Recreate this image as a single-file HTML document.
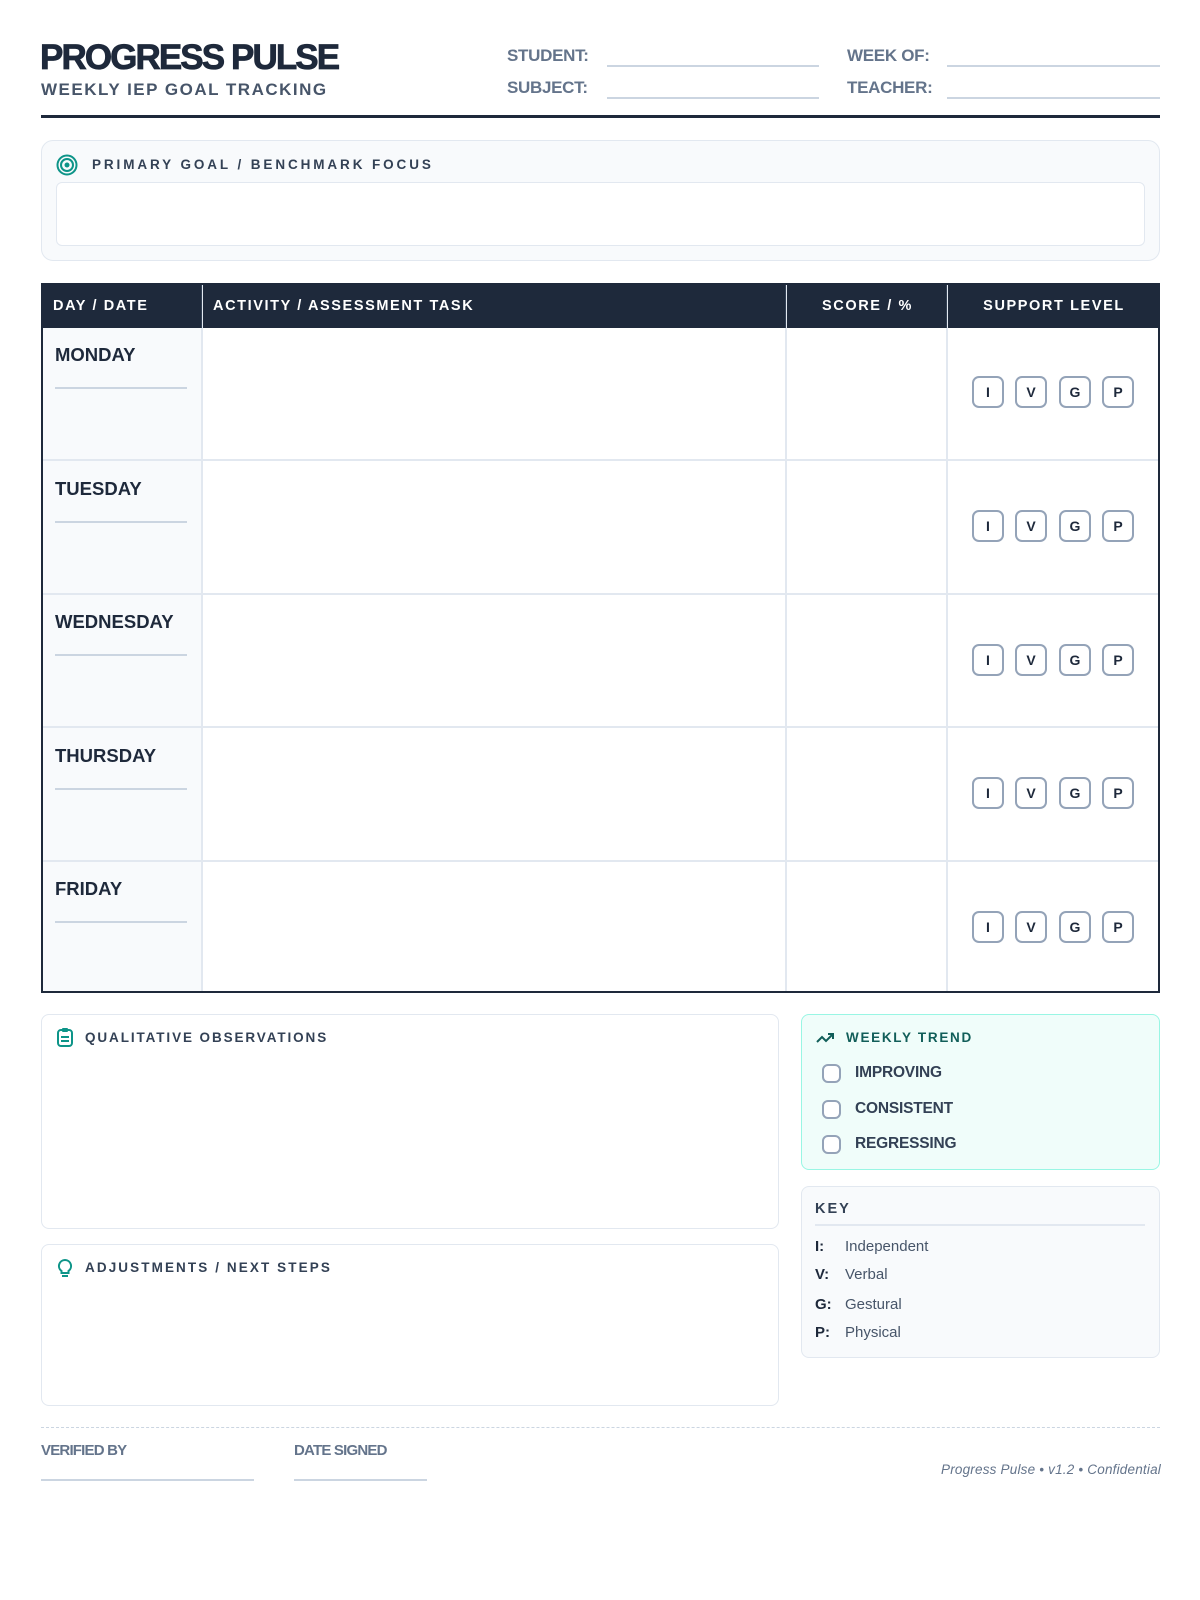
<!DOCTYPE html>
<html><head><meta charset="utf-8"><style>
*{box-sizing:border-box;margin:0;padding:0}
body{width:1200px;height:1600px;background:#fff;font-family:"Liberation Sans",sans-serif;position:relative;color:#1e293b;overflow:hidden}
.a{position:absolute}
.title{left:40px;top:38px;font-size:35px;font-weight:900;letter-spacing:-1.9px;color:#1e293b;-webkit-text-stroke:0.8px #1e293b}
.sub{left:41px;top:80px;font-size:17px;font-weight:bold;letter-spacing:1.5px;color:#475569}
.lbl{font-size:17px;font-weight:bold;color:#64748b;letter-spacing:-0.3px}
.ln{height:2px;background:#cbd5e1}
.rule{left:41px;top:115px;width:1119px;height:3px;background:#1e293b}
.goal{left:41px;top:140px;width:1119px;height:121px;background:#f8fafc;border:1.5px solid #e2e8f0;border-radius:12px}
.goalin{left:56px;top:182px;width:1089px;height:64px;background:#fff;border:1.5px solid #e2e8f0;border-radius:6px}
.cap{font-size:13.5px;font-weight:bold;letter-spacing:2.3px;color:#334155}
.tbl{left:41px;top:283px;width:1119px;height:710px;border:2px solid #1e293b;overflow:hidden}
.th{position:absolute;top:0;height:43px;background:#1e293b;color:#fff;font-size:14.5px;font-weight:bold;letter-spacing:1.6px;line-height:43px}
.day{font-size:18.5px;font-weight:bold;color:#1e293b}
.bd{position:absolute;width:32px;height:32px;border:2px solid #94a3b8;border-radius:7px;font-size:14px;font-weight:bold;text-align:center;line-height:28px;color:#1e293b;background:#fff}
.box{border:1.5px solid #e2e8f0;border-radius:8px;background:#fff}
.cb{position:absolute;width:19px;height:19px;border:2px solid #94a3b8;border-radius:6px;background:#fff}
.tl{font-size:15.5px;font-weight:bold;color:#334155;letter-spacing:-0.2px}
.kl{font-size:15px;font-weight:bold;color:#1e293b}
.kv{font-size:15px;color:#475569}
</style></head><body>
<div class="a title">PROGRESS PULSE</div>
<div class="a sub">WEEKLY IEP GOAL TRACKING</div>

<div class="a lbl" style="left:507px;top:46px">STUDENT:</div>
<div class="a ln" style="left:607px;top:65px;width:212px"></div>
<div class="a lbl" style="left:507px;top:78px">SUBJECT:</div>
<div class="a ln" style="left:607px;top:97px;width:212px"></div>
<div class="a lbl" style="left:847px;top:46px">WEEK OF:</div>
<div class="a ln" style="left:947px;top:65px;width:213px"></div>
<div class="a lbl" style="left:847px;top:78px">TEACHER:</div>
<div class="a ln" style="left:947px;top:97px;width:213px"></div>
<div class="a rule"></div>

<div class="a goal"></div>
<svg class="a" style="left:56px;top:154px" width="22" height="22" viewBox="0 0 22 22"><circle cx="11" cy="11" r="9.5" fill="none" stroke="#0d9488" stroke-width="2"/><circle cx="11" cy="11" r="6" fill="none" stroke="#0d9488" stroke-width="2"/><circle cx="11" cy="11" r="2.5" fill="#0d9488"/></svg>
<div class="a cap" style="left:92px;top:157px;letter-spacing:2.9px">PRIMARY GOAL / BENCHMARK FOCUS</div>
<div class="a goalin"></div>

<div class="a tbl">
 <div style="position:absolute;left:0;top:43px;width:158px;height:670px;background:#f8fafc"></div>
 <div class="th" style="left:0;width:1119px"></div>
 <div class="th" style="left:10px;background:none">DAY / DATE</div>
 <div class="th" style="left:170px;background:none">ACTIVITY / ASSESSMENT TASK</div>
 <div class="th" style="left:744px;width:161px;text-align:center;background:none">SCORE / %</div>
 <div class="th" style="left:905px;width:212px;text-align:center;background:none">SUPPORT LEVEL</div>
 <div style="position:absolute;left:158px;top:0;width:1.5px;height:710px;background:#e2e8f0"></div>
 <div style="position:absolute;left:742px;top:0;width:1.5px;height:710px;background:#e2e8f0"></div>
 <div style="position:absolute;left:903px;top:0;width:1.5px;height:710px;background:#e2e8f0"></div>
 <div style="position:absolute;left:158px;top:0;width:1px;height:43px;background:#334155"></div>
 <div style="position:absolute;left:742px;top:0;width:1px;height:43px;background:#334155"></div>
 <div style="position:absolute;left:903px;top:0;width:1px;height:43px;background:#334155"></div>
</div>
<div class="a" style="left:43px;top:459px;width:1115px;height:1.5px;background:#e2e8f0"></div>
<div class="a" style="left:43px;top:593px;width:1115px;height:1.5px;background:#e2e8f0"></div>
<div class="a" style="left:43px;top:726px;width:1115px;height:1.5px;background:#e2e8f0"></div>
<div class="a" style="left:43px;top:860px;width:1115px;height:1.5px;background:#e2e8f0"></div>

<div class="a day" style="left:55px;top:344px">MONDAY</div>
<div class="a day" style="left:55px;top:478px">TUESDAY</div>
<div class="a day" style="left:55px;top:611px">WEDNESDAY</div>
<div class="a day" style="left:55px;top:745px">THURSDAY</div>
<div class="a day" style="left:55px;top:878px">FRIDAY</div>
<div class="a ln" style="left:55px;top:387px;width:132px"></div>
<div class="a ln" style="left:55px;top:521px;width:132px"></div>
<div class="a ln" style="left:55px;top:654px;width:132px"></div>
<div class="a ln" style="left:55px;top:788px;width:132px"></div>
<div class="a ln" style="left:55px;top:921px;width:132px"></div>

<div class="bd" style="left:972px;top:376px">I</div><div class="bd" style="left:1015px;top:376px">V</div><div class="bd" style="left:1059px;top:376px">G</div><div class="bd" style="left:1102px;top:376px">P</div>
<div class="bd" style="left:972px;top:510px">I</div><div class="bd" style="left:1015px;top:510px">V</div><div class="bd" style="left:1059px;top:510px">G</div><div class="bd" style="left:1102px;top:510px">P</div>
<div class="bd" style="left:972px;top:644px">I</div><div class="bd" style="left:1015px;top:644px">V</div><div class="bd" style="left:1059px;top:644px">G</div><div class="bd" style="left:1102px;top:644px">P</div>
<div class="bd" style="left:972px;top:777px">I</div><div class="bd" style="left:1015px;top:777px">V</div><div class="bd" style="left:1059px;top:777px">G</div><div class="bd" style="left:1102px;top:777px">P</div>
<div class="bd" style="left:972px;top:911px">I</div><div class="bd" style="left:1015px;top:911px">V</div><div class="bd" style="left:1059px;top:911px">G</div><div class="bd" style="left:1102px;top:911px">P</div>

<div class="a box" style="left:41px;top:1014px;width:738px;height:215px"></div>
<svg class="a" style="left:56px;top:1027px" width="18" height="20" viewBox="0 0 18 20"><rect x="2" y="3" width="14" height="16" rx="3" fill="none" stroke="#0d9488" stroke-width="2"/><rect x="6" y="1" width="6" height="4" rx="1" fill="#0d9488"/><line x1="5" y1="10" x2="13" y2="10" stroke="#0d9488" stroke-width="2"/><line x1="5" y1="14" x2="13" y2="14" stroke="#0d9488" stroke-width="2"/></svg>
<div class="a cap" style="left:85px;top:1030px;letter-spacing:1.9px">QUALITATIVE OBSERVATIONS</div>

<div class="a box" style="left:41px;top:1244px;width:738px;height:162px"></div>
<svg class="a" style="left:57px;top:1258px" width="16" height="22" viewBox="0 0 16 22"><path d="M8 2a6 6 0 0 0-3.5 10.9V15h7v-2.1A6 6 0 0 0 8 2z" fill="none" stroke="#0d9488" stroke-width="2"/><line x1="5" y1="18" x2="11" y2="18" stroke="#0d9488" stroke-width="2"/></svg>
<div class="a cap" style="left:85px;top:1260px;letter-spacing:2.1px">ADJUSTMENTS / NEXT STEPS</div>

<div class="a" style="left:801px;top:1014px;width:359px;height:156px;background:#f0fdfa;border:1.5px solid #99f6e4;border-radius:8px"></div>
<svg class="a" style="left:816px;top:1031px" width="20" height="14" viewBox="0 0 20 14"><path d="M1 11l5-5 4 4 7-7M12 3h5v5" fill="none" stroke="#115e59" stroke-width="2"/></svg>
<div class="a cap" style="left:846px;top:1030px;color:#115e59;letter-spacing:1.7px">WEEKLY TREND</div>
<div class="cb" style="left:822px;top:1064px"></div><div class="a tl" style="left:855px;top:1064px">IMPROVING</div>
<div class="cb" style="left:822px;top:1100px"></div><div class="a tl" style="left:855px;top:1100px">CONSISTENT</div>
<div class="cb" style="left:822px;top:1135px"></div><div class="a tl" style="left:855px;top:1135px">REGRESSING</div>

<div class="a" style="left:801px;top:1186px;width:359px;height:172px;background:#f8fafc;border:1.5px solid #e2e8f0;border-radius:8px"></div>
<div class="a" style="left:815px;top:1201px;font-size:14.5px;font-weight:bold;letter-spacing:2px;color:#334155">KEY</div>
<div class="a ln" style="left:815px;top:1224px;width:330px;height:1.5px;background:#e2e8f0"></div>
<div class="a kl" style="left:815px;top:1238px">I:</div><div class="a kv" style="left:845px;top:1238px">Independent</div>
<div class="a kl" style="left:815px;top:1266px">V:</div><div class="a kv" style="left:845px;top:1266px">Verbal</div>
<div class="a kl" style="left:815px;top:1296px">G:</div><div class="a kv" style="left:845px;top:1296px">Gestural</div>
<div class="a kl" style="left:815px;top:1324px">P:</div><div class="a kv" style="left:845px;top:1324px">Physical</div>

<div class="a" style="left:41px;top:1427px;width:1119px;border-top:1.5px dashed #cbd5e1"></div>
<div class="a" style="left:41px;top:1442px;font-size:15px;font-weight:bold;color:#64748b;letter-spacing:-0.8px">VERIFIED BY</div>
<div class="a ln" style="left:41px;top:1479px;width:213px"></div>
<div class="a" style="left:294px;top:1442px;font-size:15px;font-weight:bold;color:#64748b;letter-spacing:-0.8px">DATE SIGNED</div>
<div class="a ln" style="left:294px;top:1479px;width:133px"></div>
<div class="a" style="right:39px;top:1462px;font-size:13.5px;font-style:italic;color:#64748b;letter-spacing:0.2px">Progress Pulse • v1.2 • Confidential</div>
</body></html>
